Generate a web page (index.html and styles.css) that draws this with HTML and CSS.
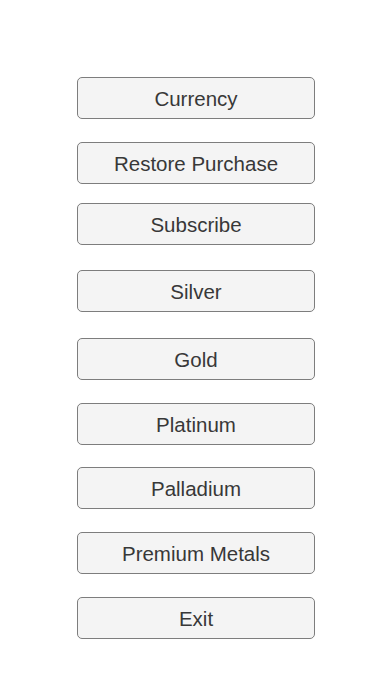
FILE: index.html
```html
<!DOCTYPE html>
<html>
<head>
<meta charset="utf-8">
<link rel="stylesheet" href="styles.css">
</head>
<body>
<div class="menu">
  <div class="btn">Currency</div>
  <div class="btn">Restore Purchase</div>
  <div class="btn g19">Subscribe</div>
  <div class="btn g25">Silver</div>
  <div class="btn g26">Gold</div>
  <div class="btn">Platinum</div>
  <div class="btn g22">Palladium</div>
  <div class="btn">Premium Metals</div>
  <div class="btn">Exit</div>
</div>
</body>
</html>
```
FILE: styles.css
```css
html, body {
  margin: 0;
  padding: 0;
  background: #ffffff;
}
body {
  width: 392px;
  height: 696px;
  font-family: "Liberation Sans", Arial, sans-serif;
}
.menu {
  display: flex;
  flex-direction: column;
  align-items: center;
  padding-top: 77px;
  gap: 23px;
}
.btn {
  box-sizing: border-box;
  width: 238px;
  height: 42px;
  border: 1px solid #7d7d7d;
  border-radius: 5px;
  background: #f4f4f4;
  color: #383838;
  font-size: 20.5px;
  display: flex;
  align-items: center;
  justify-content: center;
  padding-top: 1px;
}
.g19 { margin-top: -4px; }
.g25 { margin-top: 2px; }
.g26 { margin-top: 3px; }
.g22 { margin-top: -1px; }
```
